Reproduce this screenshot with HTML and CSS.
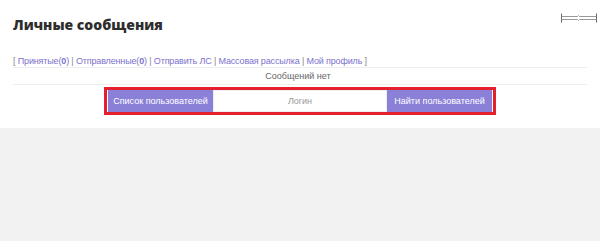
FILE: index.html
```html
<!DOCTYPE html>
<html lang="ru">
<head>
    <meta charset="UTF-8">
    <title>Личные сообщения</title>
    <link rel="stylesheet" href="styles.css">
</head>
<body>
    <div class="page">
        <div class="header">
            <h1>Личные сообщения</h1>
            <span class="resize-icon">
                <svg width="38" height="10" viewBox="0 0 38 10">
                    <path d="M1.5 0.5v9M36.5 0.5v9" stroke="#666" stroke-width="1" fill="none"/>
                    <path d="M1.5 3.5h16l1 -1 1 1h17M1.5 6.5h16l1 1 1 -1h17" stroke="#999" stroke-width="1" fill="none"/>
                </svg>
            </span>
        </div>

        <div class="pm-nav">
            [ <a href="#">Принятые(<b>0</b>)</a> | <a href="#">Отправленные(<b>0</b>)</a> | <a href="#">Отправить ЛС</a> | <a href="#">Массовая рассылка</a> | <a href="#">Мой профиль</a> ]
        </div>

        <div class="pm-row pm-empty">Сообщений нет</div>

        <div class="pm-row pm-search">
            <form class="search-form">
                <button type="button" class="btn">Список пользователей</button>
                <input type="text" class="login-input" placeholder="Логин">
                <button type="button" class="btn">Найти пользователей</button>
            </form>
        </div>
    </div>
</body>
</html>
```

FILE: styles.css
```css
body {
    margin: 0;
    background-color: #f2f2f2;
    font-family: 'Liberation Sans', Arial, sans-serif;
    height: 241px;
}

.page {
    background-color: #fff;
    padding: 0 13px;
    height: 128px;
    box-sizing: border-box;
}

.header {
    display: flex;
    justify-content: space-between;
    align-items: flex-start;
    padding-top: 15px;
    height: 50px;
    box-sizing: border-box;
}

h1 {
    margin: 0;
    font-family: 'Open Sans', sans-serif;
    font-size: 14px;
    font-weight: 800;
    color: #2e2e2e;
    line-height: 20px;
}

.resize-icon {
    margin-top: -2px;
    margin-right: -11px;
}

.resize-icon svg {
    display: block;
}

.pm-nav {
    font-size: 9px;
    letter-spacing: -0.15px;
    color: #888;
    line-height: 12px;
    padding-top: 5px;
    border-bottom: 1px solid #eee;
    white-space: nowrap;
}

.pm-nav a {
    color: #7b72cc;
    text-decoration: none;
}

.pm-nav b {
    font-weight: 700;
}

.pm-row {
    border-bottom: 1px solid #eee;
    text-align: center;
}

.pm-empty {
    font-size: 9px;
    color: #666;
    line-height: 16px;
    padding-right: 4px;
}

.pm-search {
    border-bottom: none;
    padding-top: 2px;
}

.search-form {
    display: inline-flex;
    border: 3px solid #e4202c;
    padding: 0 1px;
    margin: 0;
}

.btn {
    background-color: #8b80d8;
    border: none;
    color: #fff;
    font-family: 'Liberation Sans', Arial, sans-serif;
    font-size: 9px;
    width: 105px;
    height: 22px;
    padding: 0;
    cursor: pointer;
}

.login-input {
    width: 174px;
    height: 22px;
    box-sizing: border-box;
    border: 1px solid #eee;
    text-align: center;
    font-family: 'Liberation Sans', Arial, sans-serif;
    font-size: 9px;
    padding: 0;
    outline: none;
}

.login-input::placeholder {
    color: #999;
}
```
